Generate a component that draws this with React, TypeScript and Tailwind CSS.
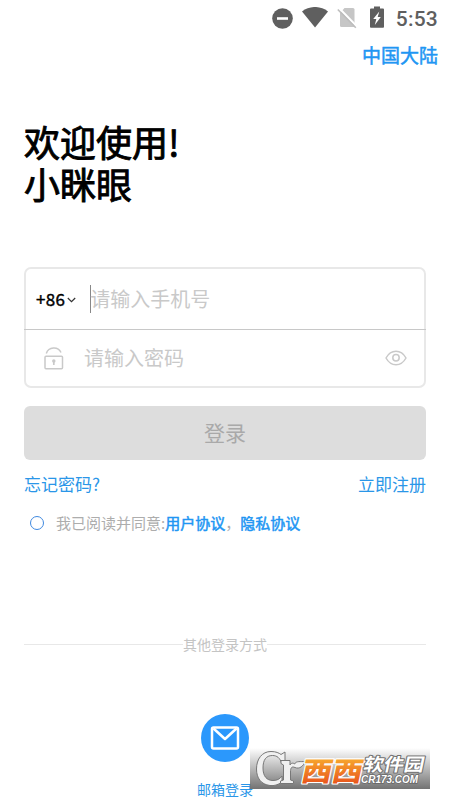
import React from 'react';

const StatusBar: React.FC = () => (
  <div className="h-[37px] pt-[7px] pr-3 flex justify-end items-start text-[#5f5f5f]">
    {/* Do not disturb */}
    <svg className="w-[21px] h-[21px] mt-px mr-[9px]" viewBox="0 0 21 21">
      <circle cx="10.5" cy="10.5" r="10.3" fill="#5f5f5f" />
      <rect x="5" y="9.2" width="11" height="2.6" fill="#fff" />
    </svg>
    {/* Wi-Fi */}
    <svg className="w-[26px] h-[21px] mr-[9px]" viewBox="0 0 26 21">
      <path d="M0 4.4C7.6-1.5 18.4-1.5 26 4.4L13 20.5Z" fill="#5f5f5f" />
    </svg>
    {/* No SIM */}
    <svg className="w-[20px] h-[22px] mr-[13px]" viewBox="0 0 20 22">
      <path d="M7.5 1H16q1.5 0 1.5 1.5V20H4.5Q3 20 3 18.5V6Z" fill="#c6c6c6" />
      <path d="M2 1L20 19.5" stroke="#fff" strokeWidth="2" />
      <path d="M0.8 2.5L18.8 20.8" stroke="#bdbdbd" strokeWidth="1.6" />
    </svg>
    {/* Battery */}
    <svg className="w-[14px] h-[22px] -mt-px mr-[12px]" viewBox="0 0 14 22">
      <path d="M4 0.5H10V2.5H13q1 0 1 1V21q0 .8-1 .8H1q-1 0-1-.8V3.5q0-1 1-1H4Z" fill="#5f5f5f" />
      <path d="M9.3 5.5L3.2 13H6.3L4.8 19L10.8 11H7.7Z" fill="#fff" />
    </svg>
    <span className="font-['Roboto'] font-medium text-[21px] leading-6 tracking-[0.2px]">5:53</span>
  </div>
);

const LockIcon: React.FC = () => (
  <svg className="w-5 h-[23px]" viewBox="0 0 20 23" fill="none" stroke="#c9c9c9" strokeWidth="1.5">
    <rect x="1" y="9.3" width="17.5" height="12.5" rx="1" />
    <path d="M2.3 6.5C4.5-.3 14-.8 17 5.5" />
    <circle cx="9.8" cy="14" r="1" fill="#c9c9c9" />
    <path d="M9.8 14V18" strokeWidth="1.7" />
  </svg>
);

const EyeIcon: React.FC = () => (
  <svg className="w-[22px] h-4" viewBox="0 0 22 16" fill="none" stroke="#c9c9c9" strokeWidth="1.5">
    <path d="M1 8C3.5 3.5 6.8 1.3 11 1.3S18.5 3.5 21 8C18.5 12.5 15.2 14.7 11 14.7S3.5 12.5 1 8Z" />
    <circle cx="11" cy="7.8" r="3.2" />
  </svg>
);

const Watermark: React.FC = () => (
  <div className="absolute left-[250px] top-[748px] w-[180px] h-[41px] bg-linear-to-b from-transparent to-[#737373]">
    <svg className="w-[180px] h-[41px] overflow-visible" viewBox="0 0 180 41">
      <defs>
        <linearGradient id="orange" x1="0" y1="0" x2="0" y2="1">
          <stop offset="0.2" stopColor="#f8ad30" />
          <stop offset="0.9" stopColor="#e8541c" />
        </linearGradient>
      </defs>
      {/* Cr mark with a leaf on the r */}
      <g strokeLinejoin="round" fill="#f0f0f0" stroke="#777" strokeWidth="1">
        <path d="M35 4V15H31.500C30 10 27 7.500 22.500 7.500C16 7.500 13 12 13 20C13 28 16.500 32.500 23 32.500C27 32.500 30 31 32 28V34C28 37 24 38 20 37.500C11 36.500 6.500 30 6.500 21C6.500 11 12 3.500 21 3.500C26 3.500 29 5 31 6.500Z" />
        <path d="M31 12.500H40V17C41.500 14.500 43.500 15 44.500 16C46.500 12.500 50.500 14 55 13.500C53.500 18 49.500 21.500 45 19.500C41.500 18 40.500 20 40.500 24V32L43.500 33V35.500H30.500V33L33.500 32V17L31 15.500Z" />
      </g>
      <g transform="translate(50 33) skewX(-12)" fontFamily="'Noto Sans CJK SC', sans-serif" strokeLinejoin="round" paintOrder="stroke">
        <text transform="scale(1.07 .94)" x="0" y="-.5" fontSize="28.5" fontWeight="900" fill="url(#orange)" stroke="#fff" strokeWidth="2.4">西西</text>
        <text transform="scale(1.12 1)" x="54" y="-10" fontSize="18" fontWeight="700" fill="#fff" stroke="#707070" strokeWidth="2">软件园</text>
      </g>
      <text x="111" y="35" fontFamily="'Liberation Sans', sans-serif" fontSize="10.5" fontStyle="italic" fontWeight="700" textLength="57" lengthAdjust="spacingAndGlyphs" fill="#fff" stroke="#666" strokeWidth="1.6" paintOrder="stroke">CR173.COM</text>
    </svg>
  </div>
);

const App: React.FC = () => {
  return (
    <div className="relative w-[450px] h-[799px] overflow-hidden bg-white font-['Noto_Sans_CJK_SC',sans-serif]">
      <StatusBar />

      <div className="h-9 pr-3 flex items-center justify-end text-[19px] text-[#2196f3] [-webkit-text-stroke:0.5px_#2196f3]">
        中国大陆
      </div>

      <div className="px-6">
        <h1 className="mt-[47px] text-[36px] leading-[42px] font-normal text-black [-webkit-text-stroke:0.9px_#000]">
          欢迎使用!
          <br />
          小眯眼
        </h1>

        {/* Credentials */}
        <div className="mt-[63px] h-[121px] rounded-[7px] border-2 border-[#e8e8e8] text-[20px] text-[#c9c9c9]">
          <div className="-mx-0.5 h-[61px] px-3 flex items-center border-b border-[#c8c8c8]">
            <span className="text-[17px] text-black tracking-[0.3px] [-webkit-text-stroke:0.4px_#000]">+86</span>
            <svg className="w-[9px] h-[6px] ml-0.5 mt-px" viewBox="0 0 9 6" fill="none" stroke="#333" strokeWidth="1.2">
              <path d="M.8 1L4.5 4.7L8.2 1" />
            </svg>
            <span className="ml-[14px] w-px h-7 bg-[#888]" />
            <span className="-ml-px">请输入手机号</span>
          </div>
          <div className="h-14 pl-[18px] pr-[17px] flex items-center">
            <LockIcon />
            <span className="ml-5 flex-1">请输入密码</span>
            <EyeIcon />
          </div>
        </div>

        <button className="mt-[18px] block w-full h-[54px] rounded-md bg-[#ddd] text-[21px] text-[#a9a9a9]">登录</button>

        <div className="mt-[11px] flex justify-between text-[17px] leading-[26px] text-[#2a96e8]">
          <span>忘记密码?</span>
          <span>立即注册</span>
        </div>

        <div className="mt-[14px] pl-1.5 h-6 flex items-center text-[15px] text-[#adadad]">
          <span className="w-[14px] h-[14px] mr-3 rounded-full border border-[#4089e0]" />
          <span>我已阅读并同意:</span>
          <span className="text-[#2196f3] [-webkit-text-stroke:0.5px_#2196f3]">用户协议</span>
          <span>，</span>
          <span className="text-[#2196f3] [-webkit-text-stroke:0.5px_#2196f3]">隐私协议</span>
        </div>

        {/* Other sign-in methods */}
        <div className="mt-[99px] h-5 flex items-center text-[14px] text-[#c4c4c4]">
          <span className="flex-1 h-px bg-[#e8e8e8]" />
          <span>其他登录方式</span>
          <span className="flex-1 h-px bg-[#e8e8e8]" />
        </div>

        <div className="mt-[60px] flex flex-col items-center">
          <div className="w-12 h-12 rounded-full bg-[#2b98fc] flex items-center justify-center">
            <svg className="w-[30px] h-6" viewBox="0 0 30 24" fill="none" stroke="#fff" strokeWidth="2.5" strokeLinejoin="round">
              <rect x="2" y="1.5" width="26" height="21" rx="1.5" />
              <path d="M3.5 2.5L15 13L26.5 2.5" />
            </svg>
          </div>
          <span className="mt-[17px] text-[14px] leading-5 text-[#2a96e8]">邮箱登录</span>
        </div>
      </div>

      <Watermark />
    </div>
  );
};

export default App;
